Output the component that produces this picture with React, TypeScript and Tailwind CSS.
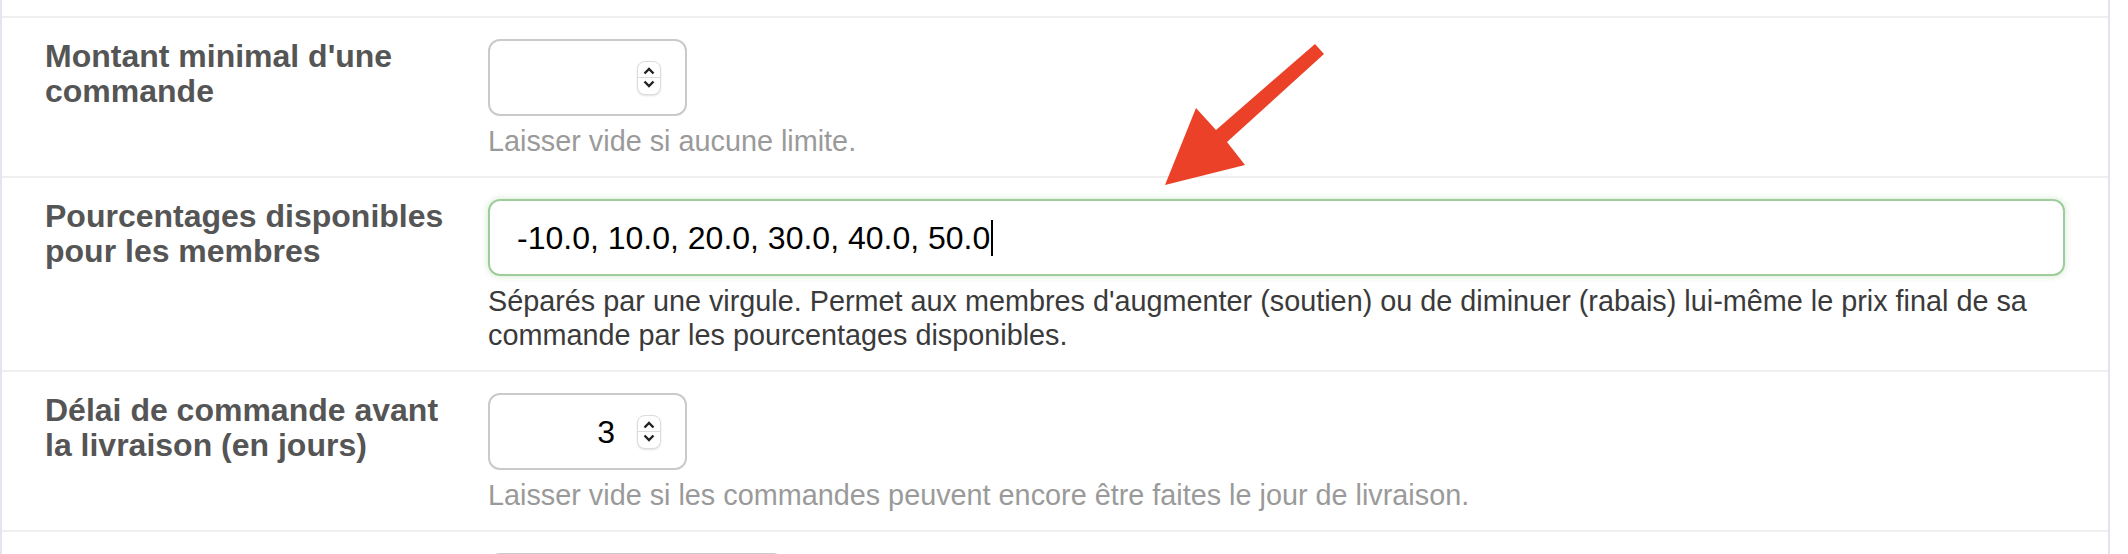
import React from "react";

type RowProps = {
  label: string;
  help?: string;
  helpDark?: boolean;
  children: React.ReactNode;
};

function Spinner() {
  return (
    <div className="flex h-[34px] w-[24px] flex-col items-center rounded-[8px] border border-[#dcdcdc] bg-white shadow-[0_1px_2px_rgba(0,0,0,0.12)]">
      <div className="flex h-[16px] w-full items-end justify-center pb-[1px]">
        <svg width="14" height="10" viewBox="0 0 14 10">
          <path d="M2.5 7.5 L7 3 L11.5 7.5" fill="none" stroke="#222" strokeWidth="2.4" />
        </svg>
      </div>
      <div className="h-px w-full bg-[#dddddd]" />
      <div className="flex h-[16px] w-full items-start justify-center pt-[1px]">
        <svg width="14" height="10" viewBox="0 0 14 10">
          <path d="M2.5 2.5 L7 7 L11.5 2.5" fill="none" stroke="#222" strokeWidth="2.4" />
        </svg>
      </div>
    </div>
  );
}

function NumberField({ value }: { value?: string }) {
  return (
    <div className="flex h-[77px] w-[199px] items-center justify-end gap-[22px] rounded-[12px] border-2 border-[#cacaca] pr-[24px] text-[32px] text-black">
      {value && <span>{value}</span>}
      <Spinner />
    </div>
  );
}

function FormRow(props: RowProps) {
  return (
    <div className="flex border-t-2 border-[#efefef] pt-[21px] pb-[18px] pl-[43px]">
      <div className="w-[415px] shrink-0 text-[32px] font-bold leading-[35px] text-[#555555]">
        {props.label}
      </div>
      <div className="ml-[28px] w-[1577px]">
        {props.children}
        {props.help && (
          <p
            className={
              props.helpDark
                ? "mt-2 text-[28.8px] leading-[34px] text-[#3a3a3a]"
                : "mt-2 text-[28.8px] leading-[34px] text-[#9a9a9a]"
            }
          >
            {props.help}
          </p>
        )}
      </div>
    </div>
  );
}

export default function App() {
  return (
    <div className="relative h-[554px] w-[2128px] overflow-hidden bg-white font-['Liberation_Sans',Arial,sans-serif]">
      <div className="h-full w-[2110px] border-x-2 border-[#e4e4ec] pt-4">
        <FormRow label="Montant minimal d'une commande" help="Laisser vide si aucune limite.">
          <NumberField />
        </FormRow>

        <FormRow
          label="Pourcentages disponibles pour les membres"
          help="Séparés par une virgule. Permet aux membres d'augmenter (soutien) ou de diminuer (rabais) lui-même le prix final de sa commande par les pourcentages disponibles."
          helpDark
        >
          <div className="flex h-[77px] w-full items-center rounded-[12px] border-2 border-[#9fcc9b] pl-[27px] text-[32px] text-black shadow-[0_0_7px_rgba(120,190,110,0.35)]">
            <span>-10.0, 10.0, 20.0, 30.0, 40.0, 50.0</span>
            <span className="ml-px h-[36px] w-[2px] bg-black" />
          </div>
        </FormRow>

        <FormRow
          label="Délai de commande avant la livraison (en jours)"
          help="Laisser vide si les commandes peuvent encore être faites le jour de livraison."
        >
          <NumberField value="3" />
        </FormRow>

        <FormRow label="">
          <div className="h-[77px] w-[297px] rounded-[12px] border-2 border-[#cacaca]" />
        </FormRow>
      </div>

      {/* red annotation arrow */}
      <svg className="pointer-events-none absolute left-0 top-0" width="2128" height="554">
        <polygon
          points="1315,44 1324,54 1227,142 1245,165 1165,185 1196,108 1216,130"
          fill="#eb4129"
        />
      </svg>
    </div>
  );
}
